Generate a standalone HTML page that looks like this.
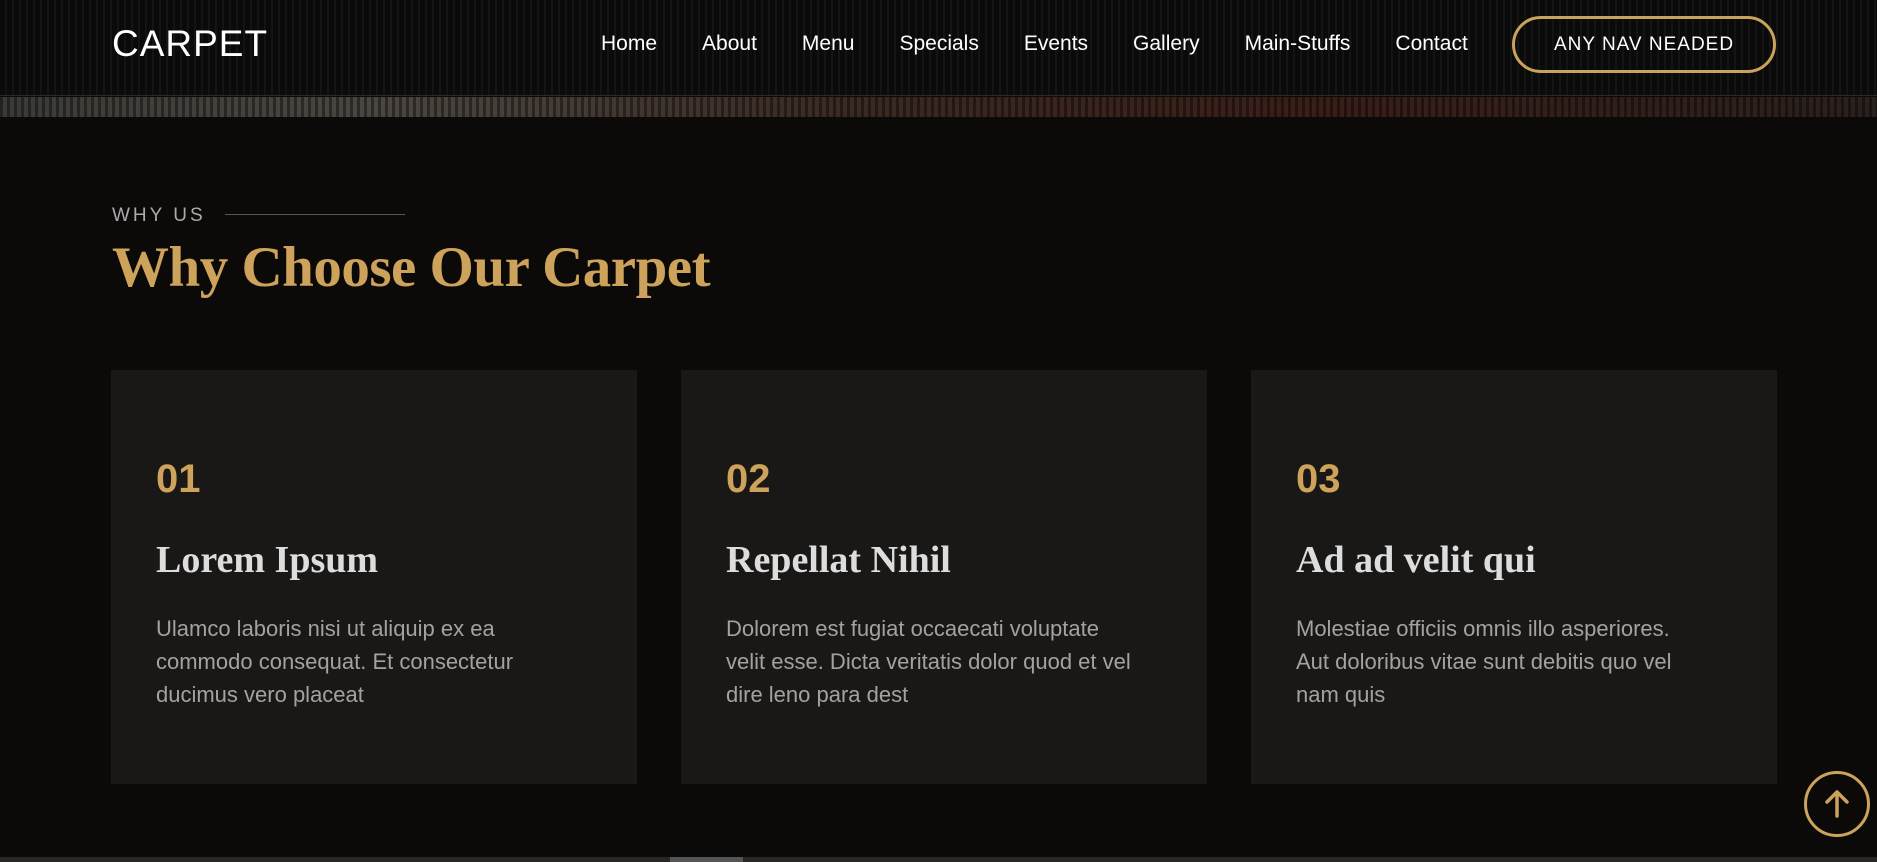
<!DOCTYPE html>
<html><head><meta charset="utf-8"><style>
*{margin:0;padding:0;box-sizing:border-box}
body{width:1877px;height:862px;overflow:hidden;background:#0b0a09;font-family:"Liberation Sans",sans-serif;position:relative}
.hdr{position:absolute;left:0;top:0;width:1877px;height:96px;background:repeating-linear-gradient(90deg,#0a0a0a 0 5px,#141414 5px 7px);border-bottom:1px solid #2a2a2a}
.strip{position:absolute;left:0;top:97px;width:1877px;height:20px;background:linear-gradient(90deg,#3a3a36,#4a4640 20%,#3a2a22 45%,#3a1e18 70%,#2a201c);}
.strip:after{content:"";position:absolute;inset:0;background:repeating-linear-gradient(90deg,rgba(0,0,0,.4) 0 3px,transparent 3px 7px)}
.logo{position:absolute;left:112px;top:23px;color:#fff;font-size:37px;letter-spacing:1px}
.nav{position:absolute;top:32px;left:601px;display:flex;gap:0;color:#fff;font-size:21px}
.nav span{margin-right:45px}
.btn{position:absolute;left:1512px;top:16px;width:264px;height:57px;border:3px solid #c9a35c;border-radius:29px;color:#fff;font-size:19px;letter-spacing:1px;text-align:center;line-height:51px}
.why{position:absolute;left:112px;top:205px;color:#aaa;font-size:19px;letter-spacing:3px}
.line{position:absolute;left:225px;top:214px;width:180px;height:1px;background:#555}
h1{position:absolute;left:112px;top:235px;color:#cda25a;font-family:"Liberation Serif",serif;font-weight:bold;font-size:57px;letter-spacing:-.5px}
.card{position:absolute;top:370px;width:526px;height:414px;background:#1a1816;padding:87px 0 0 45px}
.num{color:#cda25a;font-weight:bold;font-size:40px;height:75px}
.t{color:#ddd;font-family:"Liberation Serif",serif;font-weight:bold;font-size:38px;margin-top:6px;height:68px}
.p{color:#a5a29d;font-size:22px;line-height:33px;margin-top:6px;width:410px}
.up{position:absolute;left:1804px;top:771px;width:66px;height:66px;border:3px solid #cda25a;border-radius:50%}
.bot{position:absolute;left:0;top:857px;width:1877px;height:5px;background:#2a2624}
.bot i{position:absolute;left:670px;width:73px;height:5px;background:#555}
</style></head><body>
<div class="hdr"></div><div class="strip"></div>
<div class="logo">CARPET</div>
<div class="nav"><span>Home</span><span>About</span><span>Menu</span><span>Specials</span><span>Events</span><span>Gallery</span><span>Main-Stuffs</span><span>Contact</span></div>
<div class="btn">ANY NAV NEADED</div>
<div class="why">WHY US</div><div class="line"></div>
<h1>Why Choose Our Carpet</h1>
<div class="card" style="left:111px"><div class="num">01</div><div class="t">Lorem Ipsum</div><div class="p">Ulamco laboris nisi ut aliquip ex ea commodo consequat. Et consectetur ducimus vero placeat</div></div>
<div class="card" style="left:681px"><div class="num">02</div><div class="t">Repellat Nihil</div><div class="p">Dolorem est fugiat occaecati voluptate velit esse. Dicta veritatis dolor quod et vel dire leno para dest</div></div>
<div class="card" style="left:1251px"><div class="num">03</div><div class="t">Ad ad velit qui</div><div class="p">Molestiae officiis omnis illo asperiores. Aut doloribus vitae sunt debitis quo vel nam quis</div></div>
<div class="up"><svg width="60" height="60" viewBox="0 0 60 60"><path d="M30 42V18M20 28l10-10 10 10" stroke="#cda25a" stroke-width="3.5" fill="none" stroke-linecap="round" stroke-linejoin="round"/></svg></div>
<div class="bot"><i></i></div>
</body></html>
